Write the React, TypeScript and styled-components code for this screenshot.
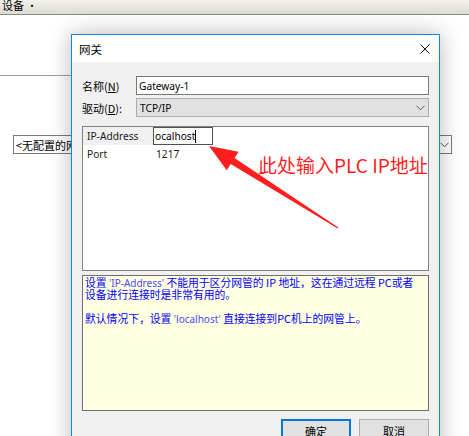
import React from "react";
import styled, { createGlobalStyle } from "styled-components";

const UI_FONT = `"Noto Sans", "Noto Sans CJK SC", sans-serif`;
const CJK_FONT = `"Noto Sans CJK SC", "Noto Sans", sans-serif`;

const Global = createGlobalStyle`
  html, body {
    margin: 0;
    padding: 0;
    width: 469px;
    height: 436px;
    overflow: hidden;
    background: #ffffff;
    font-family: ${UI_FONT};
    font-size: 11px;
    color: #000;
  }
  * { box-sizing: border-box; }
`;

const Page = styled.div`
  position: relative;
  width: 469px;
  height: 436px;
  overflow: hidden;
  background: #fff;
`;

const MenuBar = styled.div`
  height: 15px;
  background: linear-gradient(#f3f2ec, #dddcd0);
  border-bottom: 1px solid #8a8a8a;
  display: flex;
  align-items: flex-start;
  padding-left: 2px;
  overflow: hidden;
`;

const MenuLabel = styled.span`
  font-family: ${CJK_FONT};
  font-size: 11px;
  line-height: 11px;
  white-space: pre;
`;

const Workspace = styled.div`
  display: flex;
  flex-direction: column;
`;

const Divider = styled.div`
  margin-top: 60px;
  width: 71px;
  height: 1px;
  background: #9c9c9c;
`;

const GatewaySelect = styled.div`
  margin-top: 59px;
  margin-left: 13px;
  width: 439px;
  height: 19px;
  border: 1px solid #7a7a7a;
  background: #fff;
  display: flex;
  align-items: center;
  justify-content: space-between;
  padding: 0 2px 0 2px;
  font-family: ${CJK_FONT};
  font-size: 11px;
`;

const Dialog = styled.div`
  position: absolute;
  left: 71px;
  top: 34px;
  width: 369px;
  height: 420px;
  border: 1px solid #1a84d6;
  background: #f0f0f0;
  box-shadow: 0 0 22px rgba(0, 0, 0, 0.28);
  display: flex;
  flex-direction: column;
`;

const TitleBar = styled.div`
  height: 27px;
  background: #ffffff;
  display: flex;
  align-items: center;
  justify-content: space-between;
  padding: 0 9px 0 7px;
`;

const Title = styled.span`
  font-family: ${CJK_FONT};
  font-size: 11.5px;
`;

const CloseGlyph = styled.svg`
  width: 10px;
  height: 10px;
  margin-top: 1px;
`;

const Body = styled.div`
  flex: 1;
  display: flex;
  flex-direction: column;
  padding: 14px 10px 0 10px;
`;

const FieldRow = styled.div<{ $gap?: number }>`
  display: grid;
  grid-template-columns: 54px 1fr;
  align-items: center;
  height: 19px;
  margin-top: ${(p) => p.$gap ?? 0}px;
`;

const FieldLabel = styled.span`
  font-family: ${CJK_FONT};
  font-size: 11px;
  padding-top: 1px;
`;

const Key = styled.span`
  text-decoration: underline;
`;

const TextInput = styled.div`
  height: 19px;
  border: 1px solid #7a7a7a;
  background: #fff;
  display: flex;
  align-items: center;
  padding-left: 2px;
  font-size: 10.2px;
`;

const DropBox = styled.div`
  height: 19px;
  border: 1px solid #adadad;
  background: #e1e1e1;
  display: flex;
  align-items: center;
  justify-content: space-between;
  padding: 0 3px 0 3px;
  font-size: 10.2px;
`;

const Chevron = styled.svg`
  width: 9px;
  height: 6px;
`;

const PropGrid = styled.div`
  margin-top: 9px;
  height: 145px;
  border: 1px solid #828282;
  background: #ffffff;
  display: flex;
  flex-direction: column;
`;

const PropRow = styled.div`
  display: grid;
  grid-template-columns: 70px 60px 1fr;
  height: 18px;
  align-items: stretch;
`;

const PropName = styled.div<{ $active?: boolean }>`
  background: ${(p) => (p.$active ? "#f0f0f0" : "transparent")};
  display: flex;
  align-items: center;
  padding-left: 4px;
  font-size: 10.2px;
  color: #1a1a1a;
`;

const PropValue = styled.div`
  display: flex;
  align-items: center;
  padding-left: 3px;
  font-size: 10.2px;
  color: #1a1a1a;
`;

const PropEditor = styled.div`
  border: 1px solid #505050;
  background: #fff;
  display: flex;
  align-items: center;
  padding-left: 1px;
  font-size: 10.2px;
`;

const Caret = styled.span`
  display: inline-block;
  width: 1px;
  height: 13px;
  background: #000;
`;

const DescBox = styled.div`
  margin-top: 4px;
  height: 136px;
  border: 1px solid #6e6e6e;
  background: #ffffe1;
  padding: 0 2px;
  color: #0000ff;
  font-family: ${CJK_FONT};
  font-size: 10.8px;
  display: flex;
  flex-direction: column;
`;

const DescLine = styled.div`
  height: 12px;
  line-height: 12px;
  white-space: pre;
`;

const Quote = styled.span`
  color: #4a4aff;
  font-family: ${UI_FONT};
  font-size: 10px;
`;

const ButtonRow = styled.div`
  margin-top: 8px;
  display: flex;
  justify-content: flex-end;
  gap: 8px;
`;

const Button = styled.div<{ $primary?: boolean }>`
  width: 70px;
  height: 24px;
  border: ${(p) => (p.$primary ? "2px solid #0078d7" : "1px solid #adadad")};
  background: #e1e1e1;
  display: flex;
  align-items: center;
  justify-content: center;
  font-family: ${CJK_FONT};
  font-size: 11px;
`;

const Annotation = styled.svg`
  position: absolute;
  left: 0;
  top: 0;
  width: 469px;
  height: 436px;
  pointer-events: none;
`;

const Callout = styled.div`
  position: absolute;
  left: 258px;
  top: 153px;
  font-family: ${CJK_FONT};
  font-size: 19px;
  line-height: 24px;
  color: #ff1e1e;
  white-space: pre;
`;

const ChevronIcon = ({ color = "#555" }: { color?: string }) => (
  <Chevron viewBox="0 0 9 6">
    <polyline points="0.5,0.8 4.5,4.8 8.5,0.8" fill="none" stroke={color} strokeWidth="1" />
  </Chevron>
);

export default function App() {
  return (
    <Page>
      <Global />
      <MenuBar>
        <MenuLabel>设备 ·</MenuLabel>
      </MenuBar>
      <Workspace>
        <Divider />
        <GatewaySelect>
          <span>&lt;无配置的网关&gt;</span>
          <ChevronIcon />
        </GatewaySelect>
      </Workspace>

      <Dialog>
        <TitleBar>
          <Title>网关</Title>
          <CloseGlyph viewBox="0 0 10 10">
            <path d="M0.5 0.5 L9.5 9.5 M9.5 0.5 L0.5 9.5" stroke="#111" strokeWidth="1" />
          </CloseGlyph>
        </TitleBar>
        <Body>
          <FieldRow>
            <FieldLabel>
              名称(<Key>N</Key>)
            </FieldLabel>
            <TextInput>Gateway-1</TextInput>
          </FieldRow>
          <FieldRow $gap={3}>
            <FieldLabel>
              驱动(<Key>D</Key>):
            </FieldLabel>
            <DropBox>
              <span>TCP/IP</span>
              <ChevronIcon />
            </DropBox>
          </FieldRow>

          <PropGrid>
            <PropRow>
              <PropName $active>IP-Address</PropName>
              <PropEditor>
                ocalhost
                <Caret />
              </PropEditor>
              <span />
            </PropRow>
            <PropRow>
              <PropName>Port</PropName>
              <PropValue>1217</PropValue>
              <span />
            </PropRow>
          </PropGrid>

          <DescBox>
            <DescLine>
              设置 <Quote>'IP-Address'</Quote> 不能用于区分网管的 IP 地址，这在通过远程 PC或者
            </DescLine>
            <DescLine>设备进行连接时是非常有用的。</DescLine>
            <DescLine> </DescLine>
            <DescLine>
              默认情况下，设置 <Quote>'localhost'</Quote> 直接连接到PC机上的网管上。
            </DescLine>
          </DescBox>

          <ButtonRow>
            <Button $primary>确定</Button>
            <Button>取消</Button>
          </ButtonRow>
        </Body>
      </Dialog>

      <Annotation viewBox="0 0 469 436">
        <polygon
          points="209,146 238.5,151.7 234.5,158 338.3,227.5 337.7,228.5 230.7,164 226.7,170.3"
          fill="#ff1e1e"
        />
      </Annotation>
      <Callout>此处输入PLC IP地址</Callout>
    </Page>
  );
}
